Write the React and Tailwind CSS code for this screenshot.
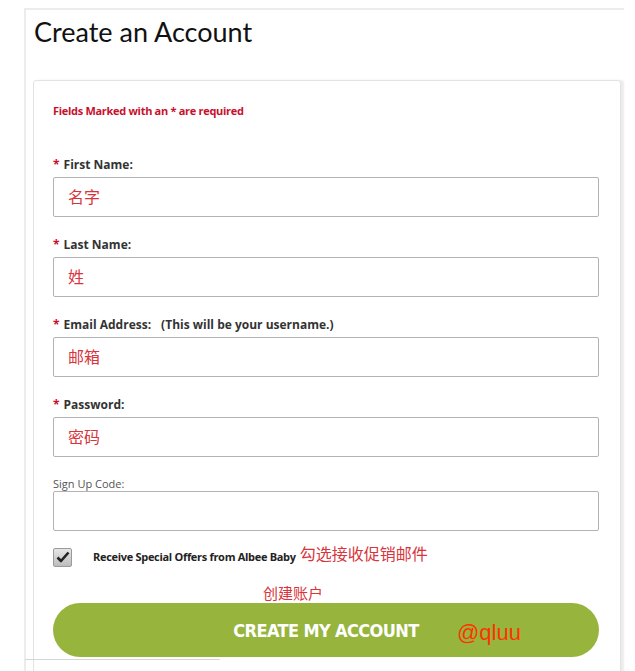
import { useState } from "react";

const labelFont = { fontFamily: '"Open Sans", "Noto Sans", sans-serif' };

function Field({ label, note, placeholder, required = true, type = "text", small }) {
  return (
    <div className="mb-[20px]">
      {small ? (
        <div className="text-[11px] leading-[14px] text-[#555]">{label}</div>
      ) : (
        <div className="text-[12px] leading-[16px] font-bold text-[#333] mb-[4px]">
          {required && <span className="text-[#c8102e] mr-[4px]">*</span>}
          {label}
          {note && <span className="ml-[10px]">{note}</span>}
        </div>
      )}
      <input
        type={type}
        placeholder={placeholder}
        className="block w-full h-[40px] border border-[#b3b3b3] rounded-[2px] bg-white pl-[14px] pb-[3px] text-[16px] outline-none placeholder:text-[#d8343c]"
        style={{ fontFamily: '"Noto Sans CJK SC", "Noto Sans", sans-serif' }}
      />
    </div>
  );
}

export default function App() {
  const [offers, setOffers] = useState(true);

  return (
    <div className="relative w-[635px] h-[671px] overflow-hidden bg-white" style={labelFont}>
      <div className="ml-[24px] mt-[8px] w-[600px] border-l-2 border-t-2 border-[#ececec]">
        {/* Title */}
        <h1
          className="pl-[8px] pt-[6px] text-[27px] leading-[32px] text-[#111] font-normal"
          style={{ fontFamily: 'Lato, "Open Sans", sans-serif' }}
        >
          Create an Account
        </h1>

        {/* Form card */}
        <div className="ml-[7px] mt-[32px] w-[588px] border border-[#e3e3e3] rounded-[3px] shadow-[3px_0_2px_rgba(0,0,0,0.08)] bg-white pl-[19px] pr-[21px] pt-[22px]">
          <p className="text-[11px] leading-[16px] font-bold text-[#c8102e] tracking-[-0.3px] mb-[38px]">
            Fields Marked with an * are required
          </p>

          <Field label="First Name:" placeholder="名字" />
          <Field label="Last Name:" placeholder="姓" />
          <Field label="Email Address:" note="(This will be your username.)" placeholder="邮箱" type="email" />
          <Field label="Password:" placeholder="密码" />
          <Field label="Sign Up Code:" small required={false} />

          {/* Offers checkbox */}
          <div className="flex items-center -mt-[4px] h-[20px]">
            <button
              onClick={() => setOffers(!offers)}
              className="w-[19px] h-[19px] rounded-[2px] border border-[#9a9a9a] bg-gradient-to-b from-[#e6e6e6] to-[#bdbdbd] flex items-center justify-center"
            >
              {offers && (
                <svg width="14" height="12" viewBox="0 0 14 12">
                  <path d="M1.5 6.5 L5 10 L12.5 1.5" fill="none" stroke="#222" strokeWidth="2.6" strokeLinejoin="round" />
                </svg>
              )}
            </button>
            <span className="ml-[21px] text-[11px] font-bold text-[#222] tracking-[-0.3px]">
              Receive Special Offers from Albee Baby
            </span>
            <span
              className="ml-[4px] -mt-[8px] text-[16px] text-[#d8343c]"
              style={{ fontFamily: '"Noto Sans CJK SC", sans-serif' }}
            >
              勾选接收促销邮件
            </span>
          </div>

          <div
            className="mt-[17px] pl-[210px] text-[15px] leading-[18px] text-[#d8343c]"
            style={{ fontFamily: '"Noto Sans CJK SC", sans-serif' }}
          >
            创建账户
          </div>

          {/* Submit */}
          <button className="mt-[1px] relative w-full h-[54px] rounded-full bg-[#97b53d] flex items-center justify-center">
            <span
              className="text-white text-[18px] font-bold tracking-[-0.6px]"
              style={{ fontFamily: '"DejaVu Sans", sans-serif', fontStretch: "condensed" }}
            >
              CREATE MY ACCOUNT
            </span>
            <span
              className="absolute left-[404px] top-[13px] text-[22px] text-[#ff3300]"
              style={{ fontFamily: '"Liberation Sans", sans-serif' }}
            >
              @qluu
            </span>
          </button>
          <div className="h-[20px]" />
        </div>
      </div>

      {/* stray bottom rule from the page underneath */}
      <div className="absolute left-[25px] top-[659px] w-[195px] h-px bg-[#d6d6d6]" />
    </div>
  );
}
